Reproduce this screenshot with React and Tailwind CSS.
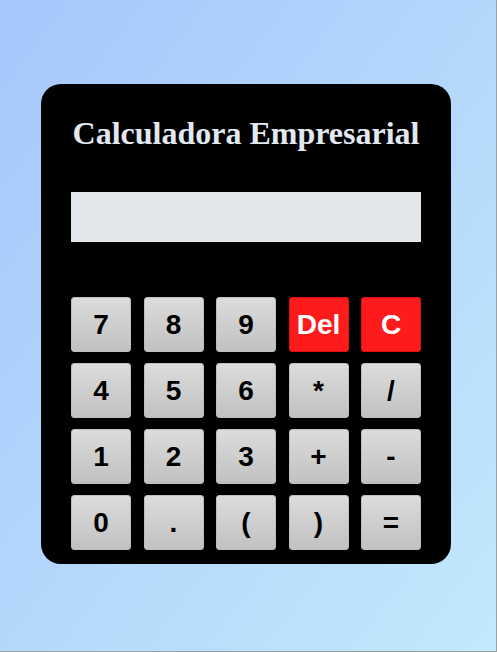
export default function App() {
  const keys = [
    ["7", "num"], ["8", "num"], ["9", "num"], ["Del", "red"], ["C", "red"],
    ["4", "num"], ["5", "num"], ["6", "num"], ["*", "num"], ["/", "num"],
    ["1", "num"], ["2", "num"], ["3", "num"], ["+", "num"], ["-", "num"],
    ["0", "num"], [".", "num"], ["(", "num"], [")", "num"], ["=", "num"],
  ];

  return (
    <div className="w-[497px] h-[652px] bg-gradient-to-br from-[#a5c7fb] to-[#c2e9fc] border-r border-b border-[#a0a0a0] pt-[84px] pl-[41px]">
      <div className="w-[410px] h-[480px] bg-black rounded-[20px] px-[30px] pt-[33px]">
        <h1 className="text-center text-[32px] leading-[32px] font-bold text-[#e2e8f0] font-['Liberation_Serif','Times_New_Roman',serif]">
          Calculadora Empresarial
        </h1>
        <div className="mt-[43px] h-[50px] bg-[#e2e6ea]"></div>
        <div className="mt-[55px] grid grid-cols-5 gap-x-[12.5px] gap-y-[11px]">
          {keys.map(([k, kind]) => (
            <button
              key={k}
              className={
                kind === "red"
                  ? "h-[55px] rounded-[3px] border border-[#e01010] bg-[#fe1b1b] text-white text-[28px] font-bold font-['Liberation_Sans',Arial,sans-serif] flex items-center justify-center"
                  : "h-[55px] rounded-[3px] border border-[#bdbdbd] bg-gradient-to-b from-[#dcdcdc] to-[#c1c1c1] text-black text-[28px] font-bold font-['Liberation_Sans',Arial,sans-serif] flex items-center justify-center"
              }
            >
              {k}
            </button>
          ))}
        </div>
      </div>
    </div>
  );
}
